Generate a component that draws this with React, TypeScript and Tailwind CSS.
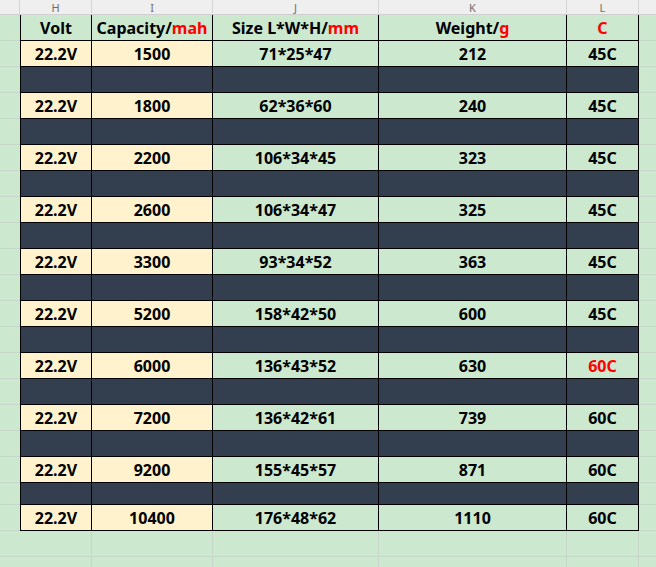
import React from "react";

type Row = { cap: string; size: string; weight: string; c: string; red?: boolean };

const data: Row[] = [
  { cap: "1500", size: "71*25*47", weight: "212", c: "45C" },
  { cap: "1800", size: "62*36*60", weight: "240", c: "45C" },
  { cap: "2200", size: "106*34*45", weight: "323", c: "45C" },
  { cap: "2600", size: "106*34*47", weight: "325", c: "45C" },
  { cap: "3300", size: "93*34*52", weight: "363", c: "45C" },
  { cap: "5200", size: "158*42*50", weight: "600", c: "45C" },
  { cap: "6000", size: "136*43*52", weight: "630", c: "60C", red: true },
  { cap: "7200", size: "136*42*61", weight: "739", c: "60C" },
  { cap: "9200", size: "155*45*57", weight: "871", c: "60C" },
  { cap: "10400", size: "176*48*62", weight: "1110", c: "60C" },
];

const cols = "grid grid-cols-[20px_72px_121px_166px_188px_72px_1fr]";

function Gutter({ h }: { h: string }) {
  return <div className={`${h} bg-[#cce8cf] border-b border-[#c6d6c8]`} />;
}

function Cell({
  children,
  first,
  bg,
  h,
}: {
  children?: React.ReactNode;
  first?: boolean;
  bg: string;
  h: string;
}) {
  return (
    <div
      className={`${h} ${bg} ${first ? "border-l" : ""} border-r border-b border-black flex items-center justify-center text-[16px] font-bold text-black leading-none`}
    >
      {children}
    </div>
  );
}

export default function App() {
  const rows: React.ReactNode[] = [];
  data.forEach((r, i) => {
    rows.push(
      <div key={`d${i}`} className={cols}>
        <Gutter h="h-[26px]" />
        <Cell first bg="bg-[#fff2cc]" h="h-[26px]">22.2V</Cell>
        <Cell bg="bg-[#fff2cc]" h="h-[26px]">{r.cap}</Cell>
        <Cell bg="bg-[#cce8cf]" h="h-[26px]">{r.size}</Cell>
        <Cell bg="bg-[#cce8cf]" h="h-[26px]">{r.weight}</Cell>
        <Cell bg="bg-[#cce8cf]" h="h-[26px]">
          <span className={r.red ? "text-[#ff0000]" : ""}>{r.c}</span>
        </Cell>
        <Gutter h="h-[26px]" />
      </div>
    );
    if (i < data.length - 1) {
      const h = i === data.length - 2 ? "h-[22px]" : "h-[26px]";
      rows.push(
        <div key={`s${i}`} className={cols}>
          <Gutter h={h} />
          <Cell first bg="bg-[#333f4f]" h={h} />
          <Cell bg="bg-[#333f4f]" h={h} />
          <Cell bg="bg-[#333f4f]" h={h} />
          <Cell bg="bg-[#333f4f]" h={h} />
          <Cell bg="bg-[#333f4f]" h={h} />
          <Gutter h={h} />
        </div>
      );
    }
  });

  const letters = ["", "H", "I", "J", "K", "L", ""];

  return (
    <div
      className="w-[656px] h-[567px] overflow-hidden bg-[#cce8cf]"
      style={{ fontFamily: '"Noto Sans", "Open Sans", sans-serif' }}
    >
      <div className={`${cols} h-[15px] bg-[#efefef] border-b border-[#d0d0d0]`}>
        {letters.map((l, i) => (
          <div
            key={i}
            className={`flex items-center justify-center text-[11px] text-[#6e6e6e] leading-none ${
              i < 6 ? "border-r border-[#d6d6d6]" : ""
            }`}
          >
            {l}
          </div>
        ))}
      </div>
      <div className={cols}>
        <Gutter h="h-[26px]" />
        <Cell first bg="bg-[#cce8cf]" h="h-[26px]">Volt</Cell>
        <Cell bg="bg-[#cce8cf]" h="h-[26px]">
          Capacity/<span className="text-[#ff0000]">mah</span>
        </Cell>
        <Cell bg="bg-[#cce8cf]" h="h-[26px]">
          Size L*W*H/<span className="text-[#ff0000]">mm</span>
        </Cell>
        <Cell bg="bg-[#cce8cf]" h="h-[26px]">
          Weight/<span className="text-[#ff0000]">g</span>
        </Cell>
        <Cell bg="bg-[#cce8cf]" h="h-[26px]">
          <span className="text-[#ff0000]">C</span>
        </Cell>
        <Gutter h="h-[26px]" />
      </div>
      {rows}
      {[0, 1].map((k) => (
        <div key={`e${k}`} className={cols}>
          <Gutter h="h-[26px]" />
          <div className="h-[26px] border-r border-b border-[#c6d6c8]" />
          <div className="h-[26px] border-r border-b border-[#c6d6c8]" />
          <div className="h-[26px] border-r border-b border-[#c6d6c8]" />
          <div className="h-[26px] border-r border-b border-[#c6d6c8]" />
          <div className="h-[26px] border-r border-b border-[#c6d6c8]" />
          <Gutter h="h-[26px]" />
        </div>
      ))}
    </div>
  );
}
